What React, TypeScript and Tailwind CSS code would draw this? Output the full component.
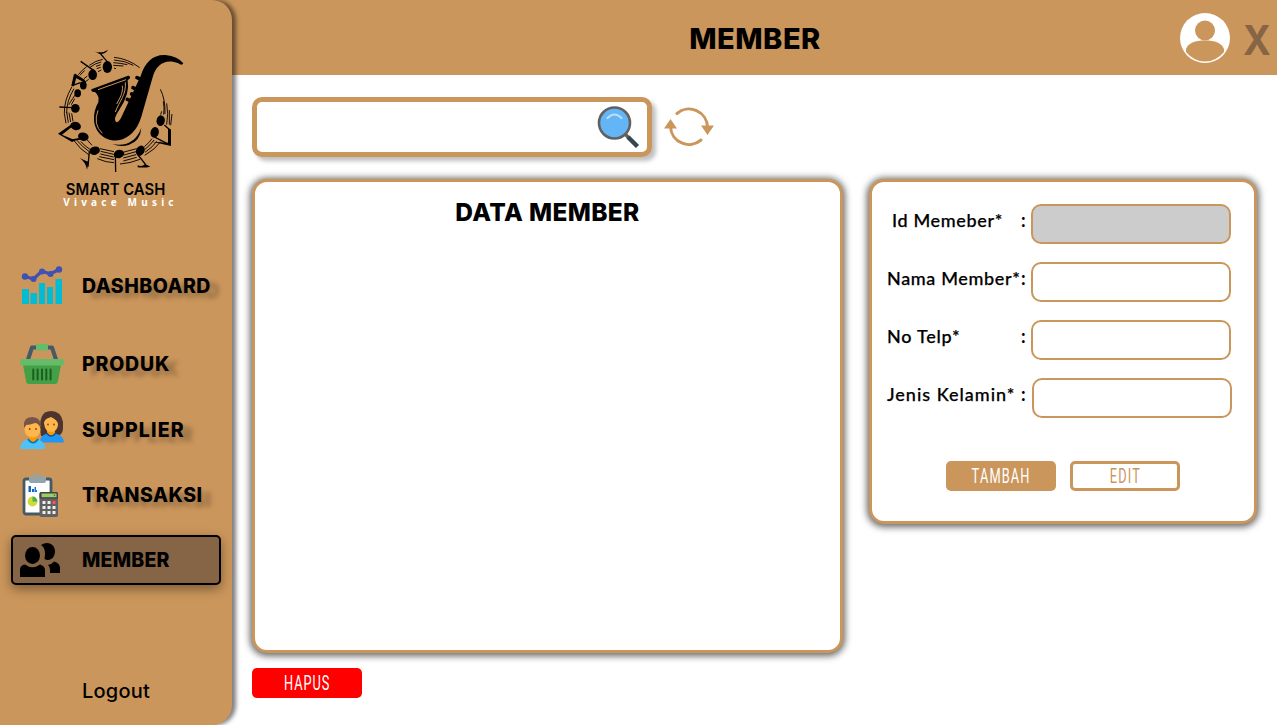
import type { ReactNode } from "react";

function Note({ x, y, r = -15 }: { x: number; y: number; r?: number }) {
  return <ellipse cx={x} cy={y} rx="16" ry="12.500" transform={`rotate(${r} ${x} ${y})`} />;
}

function SaxLogo() {
  return (
    <svg viewBox="0 0 480 420" className="h-[140px] w-[160px]" fill="#000">
      <g fill="none" stroke="#000" strokeWidth="2.8">
        <path d="M222 52Q264 56 299 83M222 60Q256 62 280 76M220 68Q240 69 262 74M220 76L250 78M222 84L228 86" />
        <path d="M188 58Q166 62 148 76M184 66Q164 70 150 82M182 74L168 79M182 82L170 86M184 90L174 95" />
        <path d="M140 80Q126 90 115 104M134 92Q126 98 120 106M142 108L132 116M146 118L138 124" />
        <path d="M96 140Q72 180 73 220M102 146Q79 184 80 220M106 164Q88 190 87 194M104 176L94 194" />
        <path d="M73 220L78 250M80 216L85 248M87 218L92 246M95 220L99 244" />
        <path d="M102 302Q122 330 146 344M110 300Q128 322 148 335M122 304Q136 320 150 328M142 300L156 316" />
        <path d="M180 326L222 335M182 334L221 343M181 342L221 351M178 350L222 359M172 356Q200 368 222 368" />
        <path d="M252 336L290 326M252 345L288 335M250 354L288 344M250 363L290 352M240 372Q270 370 300 358" />
        <path d="M313 320Q328 308 336 296M315 328Q334 312 342 300M315 337Q340 320 350 304M314 346Q346 328 362 305" />
        <path d="M361 148Q376 176 375 222M370 184Q374 204 371 224M380 190Q386 220 380 254M388 210L388 254M396 222L392 256M365 214L362 224" />
      </g>
      <g>
        <ellipse cx="202" cy="81" rx="14" ry="18" />
        <ellipse cx="158" cy="104" rx="13" ry="16" />
        <ellipse cx="130" cy="136" rx="10" ry="12.500" />
        <ellipse cx="113" cy="160" rx="10" ry="12" />
        <ellipse cx="106" cy="205" rx="13" ry="13" />
        <Note x={107} y={258} r={15} />
        <Note x={130} y={290} r={15} />
        <Note x={164} y={332} />
        <Note x={237} y={342} />
        <Note x={301} y={332} r={-60} />
        <Note x={344} y={277} r={-75} />
        <Note x={362} y={242} r={-80} />
      </g>
      <g fill="none" stroke="#000" strokeWidth="4">
        <path d="M204 68L178 37M162 92L122 64M122 128L98 136L106 104L134 122M94 203L58 201M100 252L58 282M122 297L94 300M148 334L144 380M226 345L227 396M292 342L317 374M340 289L384 312M373 255L390 270V314" />
      </g>
      <path d="M163 33Q182 44 204 29Q196 43 178 42ZM94 137L102 102L111 106L102 139ZM110 106L138 124L136 129L108 114ZM54 281L95 253L99 258L66 284L98 298L122 294L96 306ZM119 354Q137 363 146 365L141 389Q137 366 119 354ZM293 376Q306 382 316 372L331 380Q314 384 293 382ZM336 305L384 308V264L393 269V318Z" />
      <path d="M154 148L264 107Q271 106 270 115L263 121Q271 161 237 211Q219 237 228 246Q236 249 244 232L302 108C315 66 340 43 376 45Q414 49 430 70Q426 78 415 70C375 54 347 76 338 112L304 230Q286 289 236 301C196 305 164 278 162 239Q161 211 175 187Q179 168 165 156Q153 158 154 148Z" />
      <path d="M291 113L310 121M279 143L302 154M275 162L291 170M262 178L284 187" stroke="#000" strokeWidth="11" strokeLinecap="round" />
      <g fill="none" stroke="#cb965c" strokeWidth="3">
        <path d="M174 149L258 119M256 127C259 165 238 183 226 216M247 137C250 160 238 176 230 192" />
        <path d="M174 211Q158 253 187 280" />
      </g>
      <path d="M217 312Q282 324 304 263Q302 302 266 315Q242 323 217 312Z" />
    </svg>
  );
}

function DashboardIcon() {
  return (
    <svg viewBox="0 2 44 44" className="h-11 w-11">
      <path fill="#00bcd4" d="M2 27h7v15H2zM10.500 31h6.500v11h-6.500zM19 21h6v21h-6zM27 25h6v17h-6zM35.500 17h6.500v25h-6.500z" />
      <path d="M5 14.500L13.500 17L22 9L30 12L39 7.500" fill="none" stroke="#3f51b5" strokeWidth="3.200" />
      <g fill="#3f51b5"><circle cx="5" cy="14.500" r="3.200" /><circle cx="13.500" cy="17" r="3" /><circle cx="22" cy="9.500" r="3" /><circle cx="30.500" cy="12" r="3" /><circle cx="39" cy="7.500" r="3.200" /></g>
    </svg>
  );
}

function BasketIcon() {
  return (
    <svg viewBox="0 0 44 44" className="h-11 w-11">
      <path d="M7.500 19L12 5.500H32L36.500 19" fill="none" stroke="#455a64" strokeWidth="4" strokeLinejoin="round" />
      <rect x="16" y="2" width="12" height="6.500" rx="1" fill="#66bb6a" />
      <path d="M2.500 20H41.500L38 39Q37.600 42 35 42H9Q6.400 42 6 39Z" fill="#43a047" />
      <rect x="0" y="17" width="44" height="6.500" rx="2.500" fill="#66bb6a" />
      <path d="M13.300 27.500V37.500M17.600 27.500V37.500M22 27.500V37.500M26.300 27.500V37.500M30.600 27.500V37.500" stroke="#1b5e20" strokeWidth="2" strokeLinecap="round" />
    </svg>
  );
}

function PeopleIcon() {
  return (
    <svg viewBox="0 0 44 44" className="h-11 w-11">
      <path d="M21 28Q17 3 31 3Q41 3 43 14V20Q43 26 38 28Z" fill="#4e342e" />
      <path d="M20 34.500Q20 26 29 25.500H34Q43 26 44 34.500Z" fill="#2196f3" />
      <path d="M27 20H35V26Q31 30 27 26Z" fill="#ff9800" />
      <path d="M26.500 25Q31 31 36 25" fill="none" stroke="#01579b" strokeWidth="1.500" />
      <path d="M24 15Q24 11 31 9Q38 12 38 17Q37 24 31 24Q25 24 24 15Z" fill="#ffb74d" />
      <circle cx="28" cy="16.500" r=".9" fill="#784719" /><circle cx="34" cy="16.500" r=".9" fill="#784719" />
      <path d="M0 41Q1 31 10 31H15Q24 31 25.300 41Z" fill="#4fc3f7" />
      <path d="M9 26H17V32Q13 37 9 32Z" fill="#ff9800" />
      <path d="M8 31Q13 38.500 18 31" fill="none" stroke="#0277bd" strokeWidth="1.700" />
      <path d="M4 19Q3 9 12 9Q21 9 21 19Z" fill="#795548" />
      <ellipse cx="12.500" cy="21.500" rx="8" ry="8" fill="#ffb74d" />
      <path d="M4 20Q4 11 13 11Q21 12 21 20Q18 15 15 15Q10 17 6 17Z" fill="#795548" />
      <circle cx="9.700" cy="21" r=".9" fill="#784719" /><circle cx="16" cy="21" r=".9" fill="#784719" />
    </svg>
  );
}

function TransactionIcon() {
  return (
    <svg viewBox="0 0 44 48" className="mt-0.5 h-12 w-11">
      <rect x="4" y="7" width="27" height="35" rx="2" fill="#fff" stroke="#455a64" strokeWidth="2.800" />
      <path d="M9 5H13Q14 1.500 17.500 1.500Q21 1.500 22 5H26V9Q26 11 24 11H11Q9 11 9 9Z" fill="#90a4ae" /><circle cx="17.500" cy="5" r="1.700" fill="#cb965c" />
      <path d="M8.500 14H11V20H8.500ZM12 17H14V20H12Z" fill="#1565c0" /><path d="M14.500 15H16V20H14.500ZM16 18H17V20H16Z" fill="#1976d2" />
      <circle cx="12.500" cy="29.500" r="4.900" fill="#cddc39" /><path d="M12.500 29.500V24.600A4.900 4.900 0 0 1 17.400 29.500Z" fill="#4caf50" />
      <rect x="19.500" y="20" width="18.500" height="25" rx="1.800" fill="#616161" />
      <path d="M19.500 26.500V22Q19.500 20 21.500 20H36Q38 20 38 22V26.500Z" fill="#424242" />
      <rect x="21.500" y="21.500" width="15" height="3.700" fill="#9ccc65" /><circle cx="34.500" cy="23.300" r=".7" fill="#33691e" />
      <path d="M22.500 29h3v3h-3zM27.500 29h3v3h-3zM22.500 34h3v3h-3zM27.500 34h3v3h-3zM32.500 34h3v3h-3zM22.500 39h3v3h-3zM27.500 39h3v3h-3zM32.500 39h3v3h-3z" fill="#eee" />
      <path d="M32.500 29h3v3h-3z" fill="#ff5252" />
    </svg>
  );
}

function MemberIcon() {
  return (
    <svg viewBox="0 0 44 44" className="h-11 w-11">
      <ellipse cx="12.500" cy="17.500" rx="7.500" ry="8.500" />
      <path d="M0 39V32Q0 27 5 26.500Q12.500 32 20 26.500Q25 28 25 32V39Z" />
      <path d="M21 7Q24 5 27 5C32 5 35 9 35 13.500C35 18 32 22 28 22Q26 22 24.500 21Q26.500 10 21 7Z" />
      <path d="M28 27Q32 26 34 23.500Q40 25 40 30V35H30Q30.500 29 28 27Z" />
    </svg>
  );
}

function NavItem({ label, icon, spacing, className, active }: { label: string; icon: ReactNode; spacing: string; className: string; active?: boolean }) {
  return (
    <a className={`ml-[11px] flex h-[50px] w-[210px] items-center rounded-[5px] border-2 pl-[7px] ${active ? "border-black bg-[#866446] shadow-[0_4px_12px_rgba(0,0,0,.4)]" : "border-transparent"} ${className}`}>
      {icon}
      <span className={`ml-[18px] whitespace-nowrap text-[19.5px] leading-6 font-extrabold ${spacing} ${active ? "" : "[text-shadow:9px_5px_5px_rgba(0,0,0,.28)]"}`}>{label}</span>
    </a>
  );
}

function Field({ label, spacing, className = "", disabled, inputClass = "" }: { label: string; spacing: string; className?: string; disabled?: boolean; inputClass?: string }) {
  return (
    <label className={`flex h-10 items-start ${className}`}>
      <span className={`w-[134px] pt-1 font-['Lato','Noto_Sans',sans-serif] text-[18px] leading-6 font-medium whitespace-nowrap [-webkit-text-stroke:.25px_black] ${spacing}`}>{label}</span>
      <span className="w-[10px] pt-1 font-['Lato',sans-serif] text-[18px] leading-6 font-bold">:</span>
      <input disabled={disabled} className={`h-10 w-[200px] shrink-0 rounded-[10px] border-2 border-[#cb965c] ${disabled ? "bg-[#ccc]" : "bg-white"} ${inputClass}`} />
    </label>
  );
}

function ActionButton({ label, className, spacing }: { label: string; className: string; spacing: string }) {
  return (
    <button className={`flex h-[30px] w-[110px] items-center justify-center rounded-[5px] font-['Roboto',sans-serif] text-[20px] leading-5 font-normal ${className}`}>
      <span className={`inline-block scale-x-[.64] ${spacing}`}>{label}</span>
    </button>
  );
}

export default function App() {
  return (
    <div className="flex h-[725px] w-[1277px] overflow-hidden bg-white font-['Inter',sans-serif] text-black">
      <aside className="relative z-10 flex w-[232px] shrink-0 flex-col rounded-r-[20px] bg-[#cb965c] shadow-[4px_0_4px_rgba(0,0,0,.5)]">
        <div className="ml-10 mt-10 h-[140px] w-[160px]"><SaxLogo /></div>
        <div className="flex h-[81px] w-[232px] flex-col items-center">
          <span className="mt-px text-[16px] leading-[16px] font-semibold whitespace-nowrap scale-x-[.93]">SMART CASH</span>
          <span className="ml-[9px] font-['Noto_Sans',sans-serif] text-[10px] leading-[10px] font-bold tracking-[4.2px] whitespace-nowrap text-white">Vivace Music</span>
        </div>
        <nav className="flex flex-col">
          <NavItem label="DASHBOARD" icon={<DashboardIcon />} spacing="tracking-[.5px]" className="" />
          <NavItem label="PRODUK" icon={<BasketIcon />} spacing="tracking-[.8px]" className="mt-7" />
          <NavItem label="SUPPLIER" icon={<PeopleIcon />} spacing="tracking-[1.1px]" className="mt-4" />
          <NavItem label="TRANSAKSI" icon={<TransactionIcon />} spacing="tracking-[.5px]" className="mt-[15px]" />
          <NavItem label="MEMBER" icon={<MemberIcon />} spacing="tracking-[.2px]" className="mt-[15px]" active />
        </nav>
        <a className="ml-[82px] mt-[94px] text-[20px] leading-6 font-medium tracking-[.2px]">Logout</a>
      </aside>

      <div className="flex grow flex-col">
        <header className="-ml-6 flex h-[75px] shrink-0 items-center bg-[#cb965c] pl-6">
          <div className="w-[948px] shrink-0 pl-[98px] text-center text-[29px] leading-9 font-extrabold tracking-[.5px]"><h1 className="pt-0.5">MEMBER</h1></div>
          <svg viewBox="0 0 50 50" className="h-[50px] w-[50px] shrink-0">
            <circle cx="25" cy="25" r="25" fill="#fff" />
            <circle cx="25" cy="17.500" r="10" fill="#cb965c" />
            <path d="M6 39V36C8 30 15 27.500 25 27.500C35 27.500 42 30 44 36V39Q36 48.500 25 48.500Q14 48.500 6 39Z" fill="#cb965c" />
          </svg>
          <button className="ml-[13px] origin-left scale-x-[.92] pt-1 text-[41px] leading-[48px] font-bold text-[#866446]">X</button>
        </header>

        <main className="flex grow flex-col pl-5 pt-[22px]">
          <div className="flex h-[60px] items-center">
            <div className="flex h-[60px] w-[400px] items-center justify-end rounded-[10px] border-[5px] border-[#cb965c] bg-white pr-[7px] shadow-[4px_4px_4px_rgba(0,0,0,.25)]">
              <svg viewBox="0 0 44 44" className="h-11 w-11">
                <path d="M28 28L33 33" stroke="#616161" strokeWidth="3.500" />
                <path d="M32 32L41.500 41.500" stroke="#37474f" strokeWidth="4.500" />
                <circle cx="18.500" cy="18" r="15.500" fill="#64b5f6" stroke="#616161" strokeWidth="2.600" />
                <path d="M11.500 13Q18.500 6 25.500 13" fill="none" stroke="#bbdefb" strokeWidth="2.200" strokeLinecap="round" />
              </svg>
            </div>
            <svg viewBox="0 0 50 40" className="ml-3 h-10 w-[50px]" fill="none" stroke="#cb965c" strokeWidth="3" strokeLinecap="round">
              <path d="M13 6.500A18.500 18.500 0 0 1 43.500 20M37 33A18.500 18.500 0 0 1 6.500 20" />
              <path d="M0 21.500L6.500 12L13 21.500ZM37 18.500H50L43.500 28Z" fill="#cb965c" stroke="none" />
            </svg>
          </div>
          <div className="mt-[22px] flex items-start gap-[26px]">
            <section className="h-[474px] w-[591px] shrink-0 rounded-[15px] border-[3px] border-[#cb965c] bg-white pt-[14px] text-center shadow-[0_1px_7px_2px_rgba(0,0,0,.6)]">
              <h2 className="text-[24.5px] leading-8 font-extrabold tracking-[.35px]">DATA MEMBER</h2>
            </section>
            <section className="flex h-[345px] w-[388px] shrink-0 flex-col rounded-[15px] border-[3px] border-[#cb965c] bg-white pl-[15px] pt-[22px] shadow-[0_1px_7px_2px_rgba(0,0,0,.6)]">
              <Field label="Id Memeber*" spacing="tracking-[.65px] pl-[5px]" disabled />
              <Field label="Nama Member*" spacing="tracking-[.65px]" className="mt-[18px]" />
              <Field label="No Telp*" spacing="tracking-[.75px]" className="mt-[18px]" />
              <Field label="Jenis Kelamin*" spacing="tracking-[1px]" className="mt-[18px]" inputClass="ml-px" />
              <div className="ml-[59px] mt-[43px] flex gap-[14px]">
                <ActionButton label="TAMBAH" className="bg-[#cb965c] text-white" spacing="tracking-[1.8px]" />
                <ActionButton label="EDIT" className="border-[3px] border-[#cb965c] bg-white text-[#cb965c]" spacing="tracking-[1.8px]" />
              </div>
            </section>
          </div>
          <ActionButton label="HAPUS" className="mt-[15px] bg-[#f00] text-white" spacing="tracking-[1.5px]" />
        </main>
      </div>
    </div>
  );
}
